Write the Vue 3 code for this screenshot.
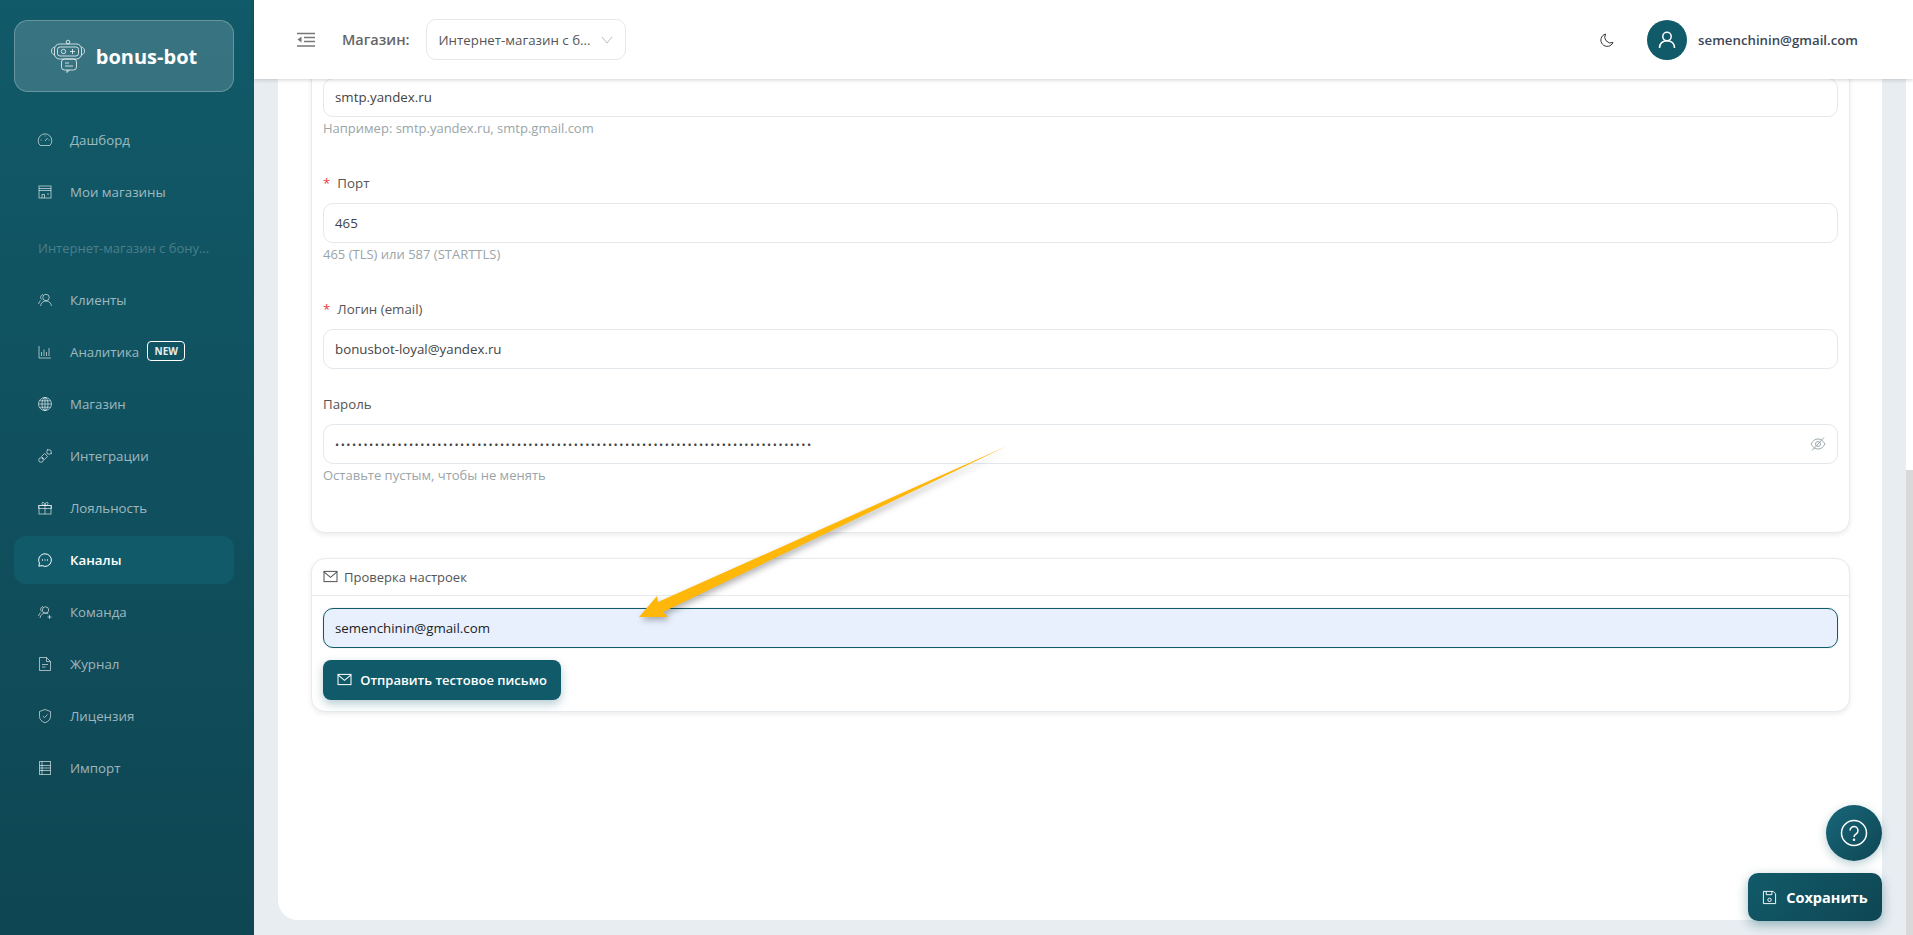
<template>
  <div class="app">
    <!-- SIDEBAR -->
    <aside class="sidebar">
      <div class="logo">
        <svg class="logo-icon" viewBox="0 0 34 34" fill="none" stroke="currentColor" stroke-width="1">
          <circle cx="17" cy="3" r="1.800" />
          <rect x="3.500" y="5" width="27" height="15" rx="5" />
          <path d="M3.500 8c-4 1-4 7 0 8M30.500 8c4 1 4 7 0 8" />
          <rect x="6.500" y="8" width="21" height="9" rx="2.500" />
          <circle cx="12.500" cy="12.500" r="2.200" />
          <path d="M19 12.500h5M21.500 10v5" />
          <rect x="10.500" y="20" width="15" height="11" rx="3" />
          <path d="M14 24h4M14 27h8" />
          <path d="M16 31v2.500l2.500-2.500" />
        </svg>
        <span>bonus-bot</span>
      </div>

      <nav class="nav">
        <template v-for="item in menu" :key="item.name">
          <div v-if="item.group" class="group">{{ item.name }}</div>
          <div v-else class="nav-item" :class="{ active: item.active }">
            <svg class="nav-icon" viewBox="0 0 16 16" fill="none" stroke="currentColor" stroke-width="1" v-html="item.icon"></svg>
            <span>{{ item.name }}</span>
            <span v-if="item.badge" class="badge">{{ item.badge }}</span>
          </div>
        </template>
      </nav>
    </aside>

    <div class="main">
      <!-- HEADER -->
      <header class="header">
        <svg class="toggle" viewBox="0 0 18 16" fill="none" stroke="#777" stroke-width="1.500">
          <path d="M0 1.500h18M7 5.500h11M7 9.500h11M0 14h18" />
          <path d="M4.500 4.500v6L0.500 7.500z" fill="#777" stroke="none" />
        </svg>
        <span class="shop-label">Магазин:</span>
        <div class="select">
          <span>Интернет-магазин с б...</span>
          <svg viewBox="0 0 12 8" fill="none" stroke="#bbb" stroke-width="1"><path d="M1 1l5 6 5-6" /></svg>
        </div>
        <div class="spacer"></div>
        <svg class="moon" viewBox="0 0 16 16" fill="none" stroke="#333" stroke-width="1">
          <path d="M6.500 2a6.300 6.300 0 1 0 7.500 8.500 6 6 0 0 1-7.500-8.500z" />
        </svg>
        <div class="avatar">
          <svg viewBox="0 0 20 20" fill="none" stroke="#fff" stroke-width="1.500">
            <circle cx="10" cy="6.500" r="4.200" />
            <path d="M2.500 18c0-4.500 3.200-7.300 7.500-7.300s7.500 2.800 7.500 7.300" />
          </svg>
        </div>
        <span class="email">semenchinin@gmail.com</span>
      </header>

      <div class="body">
        <div class="content">
          <div class="page">
            <!-- SMTP FORM -->
            <div class="card form-card">
              <div v-for="f in fields" :key="f.value" class="field">
                <label v-if="f.label"><i v-if="f.required">*</i>{{ f.label }}</label>
                <div class="input" :class="{ password: f.password }">
                  <span>{{ f.value }}</span>
                  <svg v-if="f.password" viewBox="0 0 16 16" fill="none" stroke="#9fabaf" stroke-width="1">
                    <path d="M1 8c2-3.500 4.300-5 7-5s5 1.500 7 5c-2 3.500-4.300 5-7 5s-5-1.500-7-5z" />
                    <circle cx="8" cy="8" r="2.500" />
                    <path d="M2 14.500L14 1.500" />
                  </svg>
                </div>
                <div v-if="f.hint" class="hint">{{ f.hint }}</div>
              </div>
            </div>

            <!-- TEST -->
            <div class="card test-card">
              <div class="test-head">
                <svg viewBox="0 0 16 14" fill="none" stroke="#555" stroke-width="1.100">
                  <rect x="1" y="1.500" width="14" height="11" />
                  <path d="M1 2l7 6 7-6" />
                </svg>
                <span>Проверка настроек</span>
              </div>
              <div class="test-body">
                <div class="input focused"><span>semenchinin@gmail.com</span></div>
                <button class="send">
                  <svg viewBox="0 0 16 14" fill="none" stroke="#fff" stroke-width="1.100">
                    <rect x="1" y="1.500" width="14" height="11" />
                    <path d="M1 2l7 6 7-6" />
                  </svg>
                  Отправить тестовое письмо
                </button>
              </div>
            </div>
          </div>
        </div>
        <div class="scrollbar"><div class="thumb"></div></div>
      </div>
    </div>

    <!-- ARROW annotation -->
    <svg class="arrow" width="400" height="190" viewBox="630 440 400 190">
      <polygon points="1007,446 658,602 657,596 639,617 668,617 663,612" fill="#ffb70a" />
    </svg>

    <button class="help">
      <svg viewBox="0 0 28 28" fill="none" stroke="#fff" stroke-width="1.500">
        <circle cx="14" cy="14" r="12.500" />
        <path d="M10 11.500a4 4 0 1 1 6.200 3.300c-1.500 1-2.200 1.700-2.200 3.200" />
        <circle cx="14" cy="20.800" r="0.500" fill="#fff" />
      </svg>
    </button>
    <button class="save">
      <svg viewBox="0 0 16 16" fill="none" stroke="#fff" stroke-width="1">
        <path d="M1.500 1.500h10.500l2.500 2.500v10.500h-13z" />
        <path d="M4.500 1.500v3.500h6v-3.500" />
        <circle cx="8" cy="10.500" r="1.800" />
      </svg>
      Сохранить
    </button>
  </div>
</template>

<script setup>
const menu = [
  { name: 'Дашборд', icon: '<path d="M3.200 13.500a6.800 6.800 0 1 1 9.600 0z"/><path d="M8 9l2.500-3"/><path d="M3.500 8h1M11.500 8h1M8 3.500v1"/>' },
  { name: 'Мои магазины', icon: '<rect x="2" y="2" width="12" height="12"/><path d="M2 6.500h12M2 4.500h12M5 14v-3.500h2.500V14M10 10h2"/>' },
  { name: 'Интернет-магазин с бону...', group: true },
  { name: 'Клиенты', icon: '<circle cx="9" cy="5.500" r="3.200"/><path d="M3.500 14c.5-3 2.500-5 5.500-5s5 2 5.500 5M6 2.500C3.500 3 3 6 4.500 7.500M3.500 8.500C2.500 9.500 2 10.500 1.500 12"/>' },
  { name: 'Аналитика', badge: 'NEW', icon: '<path d="M2 2v12h12"/><path d="M4.500 12V8M7 12V5.500M9.500 12V8M12 12V4"/>' },
  { name: 'Магазин', icon: '<circle cx="8" cy="8" r="6.500"/><ellipse cx="8" cy="8" rx="3" ry="6.500"/><path d="M1.500 8h13M2.500 4.800h11M2.500 11.200h11M8 1.500v13"/>' },
  { name: 'Интеграции', icon: '<ellipse cx="4" cy="12" rx="2.300" ry="2.300"/><ellipse cx="12" cy="4" rx="2.300" ry="2.300"/><path d="M4.500 8.500l3-3 3 3-3 3zM5.500 10.500l-0.500 .5M10.500 5.500l.5-.5M10 2l1-1M14 6l1-1"/>' },
  { name: 'Лояльность', icon: '<rect x="2" y="5.500" width="12" height="8.500"/><path d="M1.500 5.500h13v3h-13zM8 5.500V14M8 5.500C6 5.500 4.500 4.500 5 3s3-.5 3 2.500c0-3 2.500-4 3-2.500s-1 2.500-3 2.500z"/>' },
  { name: 'Каналы', active: true, icon: '<path d="M8 1.800a6.300 6.300 0 1 1-3 11.800l-3.200.6.700-3A6.300 6.300 0 0 1 8 1.800z"/><path d="M5 8h.8M7.600 8h.8M10.200 8h.8" stroke-width="1.400"/>' },
  { name: 'Команда', icon: '<circle cx="8.500" cy="6" r="3.200"/><path d="M3 14c.5-3 2.500-5 5.500-5 1 0 2 .3 2.800.8M6 2.500C3.500 3 3 6 4.500 7.500M3.500 8.500C2.500 9.500 2 10.500 1.500 12M12.500 11v4M10.500 13h4"/>' },
  { name: 'Журнал', icon: '<path d="M2.500 1.500h7l4 4v9h-11z"/><path d="M9.500 1.500v4h4M5 8.500h6M5 11h3.500"/>' },
  { name: 'Лицензия', icon: '<path d="M8 1.500l5.500 2v5c0 3-2.200 5-5.500 6.300-3.300-1.300-5.500-3.300-5.500-6.300v-5z"/><path d="M5.800 8l1.700 1.700 3-3.200"/>' },
  { name: 'Импорт', icon: '<rect x="2.500" y="1.500" width="11" height="13"/><path d="M5 1.500v13M2.500 5.500h11M2.500 8h11M2.500 10.500h11"/>' }
]

const fields = [
  { value: 'smtp.yandex.ru', hint: 'Например: smtp.yandex.ru, smtp.gmail.com' },
  { label: 'Порт', required: true, value: '465', hint: '465 (TLS) или 587 (STARTTLS)' },
  { label: 'Логин (email)', required: true, value: 'bonusbot-loyal@yandex.ru' },
  { label: 'Пароль', password: true, value: '•'.repeat(84), hint: 'Оставьте пустым, чтобы не менять' }
]
</script>

<style>
html, body {
  margin: 0;
  overflow: hidden;
}
</style>

<style scoped>
.app {
  display: flex;
  position: relative;
  height: 935px;
  overflow: hidden;
  background: #e8edf2;
  font-family: "Open Sans", "Noto Sans", sans-serif;
  color: #333;
}

/* sidebar */
.sidebar {
  width: 254px;
  flex-shrink: 0;
  padding: 20px 20px 0 14px;
  box-sizing: border-box;
  background: linear-gradient(180deg, #115a69 0%, #0f4653 100%);
}

.logo {
  height: 72px;
  box-sizing: border-box;
  display: flex;
  align-items: center;
  justify-content: center;
  gap: 11px;
  border: 1px solid rgba(255, 255, 255, 0.25);
  border-radius: 14px;
  background: rgba(255, 255, 255, 0.16);
  color: #fff;
  font-size: 20px;
  font-weight: 700;
}

.logo-icon {
  width: 34px;
  height: 34px;
  color: rgba(255, 255, 255, 0.75);
}

.nav {
  margin-top: 24px;
}

.nav-item {
  height: 48px;
  margin-bottom: 4px;
  padding-left: 24px;
  display: flex;
  align-items: center;
  border-radius: 12px;
  color: rgba(255, 255, 255, 0.6);
  font-size: 13.300px;
  font-weight: 500;
}

.nav-item.active {
  background: #115a69;
  color: #fff;
  font-weight: 600;
}

.nav-icon {
  width: 16px;
  height: 16px;
  margin-left: -1px;
  margin-right: 17px;
  flex-shrink: 0;
}

.group {
  height: 56px;
  padding-left: 24px;
  display: flex;
  align-items: center;
  color: rgba(255, 255, 255, 0.25);
  font-size: 13px;
  font-weight: 500;
}

.badge {
  margin-left: 8px;
  width: 38px;
  height: 20px;
  line-height: 18px;
  margin-top: -2px;
  text-align: center;
  box-sizing: border-box;
  border: 1px solid #fff;
  border-radius: 4px;
  color: #e6eef0;
  font-size: 10px;
  font-weight: 700;
}

/* header */
.main {
  flex: 1;
  min-width: 0;
  display: flex;
  flex-direction: column;
}

.header {
  height: 79px;
  flex-shrink: 0;
  position: relative;
  z-index: 2;
  display: flex;
  align-items: center;
  padding: 0 55px 0 43px;
  background: #fff;
  box-shadow: 0 1px 4px rgba(0, 0, 0, 0.18);
}

.toggle {
  width: 18px;
  height: 16px;
  margin-right: 27px;
}

.shop-label {
  margin-right: 16px;
  color: #666;
  font-size: 14.500px;
  font-weight: 600;
}

.select {
  width: 200px;
  height: 41px;
  box-sizing: border-box;
  display: flex;
  align-items: center;
  justify-content: space-between;
  padding: 0 12px;
  border: 1px solid #e2e8ec;
  border-radius: 10px;
  color: #555;
  font-size: 13.300px;
}

.select svg {
  width: 12px;
  height: 8px;
}

.spacer {
  flex: 1;
}

.moon {
  width: 16px;
  height: 16px;
  margin-right: 32px;
}

.avatar {
  width: 40px;
  height: 40px;
  border-radius: 50%;
  background: #115a69;
  display: flex;
  align-items: center;
  justify-content: center;
  margin-right: 11px;
}

.avatar svg {
  width: 20px;
  height: 20px;
}

.email {
  font-size: 13.250px;
  font-weight: 600;
  color: #3a4656;
}

/* content */
.body {
  flex: 1;
  min-height: 0;
  display: flex;
}

.content {
  flex: 1;
  min-width: 0;
  padding: 0 24px;
  height: 841px;
}

.page {
  height: 100%;
  box-sizing: border-box;
  padding: 0 32px 0 33px;
  background: #fff;
  border-radius: 0 0 20px 20px;
  overflow: hidden;
}

.scrollbar {
  width: 7px;
  background: #fff;
  flex-shrink: 0;
}

.thumb {
  margin-top: 391px;
  height: 465px;
  background: #d9d9d9;
}

.card {
  border: 1px solid #e6ebef;
  border-radius: 14px;
  background: #fff;
  box-shadow: 0 2px 5px rgba(0, 0, 0, 0.08);
}

.form-card {
  margin-top: -40px;
  padding: 37.500px 11px 11.500px;
}

.field {
  margin-bottom: 25.400px;
}

label {
  display: block;
  height: 20px;
  line-height: 20px;
  margin-bottom: 10px;
  color: #555;
  font-size: 13.300px;
}

label i {
  font-style: normal;
  color: #e53e3e;
  margin-right: 7px;
}

.input {
  height: 39.600px;
  box-sizing: border-box;
  display: flex;
  align-items: center;
  justify-content: space-between;
  padding: 0 11px;
  border: 1px solid #e2e8ec;
  border-radius: 10px;
  background: #fff;
  color: #444;
  font-size: 13.300px;
}

.input svg {
  width: 16px;
  height: 16px;
}

.password span {
  font-size: 11px;
  letter-spacing: 1.550px;
}

.hint {
  height: 31px;
  line-height: 22px;
  color: #9aa5a9;
  font-size: 13px;
}

.test-card {
  margin-top: 25px;
  height: 154px;
  box-sizing: border-box;
}

.test-head {
  height: 37px;
  box-sizing: border-box;
  display: flex;
  align-items: center;
  gap: 6px;
  padding: 0 11px;
  border-bottom: 1px solid #e6ebef;
  color: #555;
  font-size: 13px;
  font-weight: 500;
}

.test-head svg {
  width: 15px;
  height: 13px;
}

.test-body {
  padding: 12px 11px;
}

.input.focused {
  height: 40px;
  border-color: #115a69;
  background: #e8f0fe;
  color: #222;
  box-shadow: 0 0 0 1px rgba(17, 90, 105, 0.05);
}

.send {
  margin-top: 12px;
  width: 238px;
  height: 40px;
  display: flex;
  align-items: center;
  justify-content: center;
  gap: 8px;
  padding: 0;
  border: none;
  border-radius: 8px;
  background: #115a69;
  color: #fff;
  font-family: inherit;
  font-size: 13px;
  font-weight: 600;
  box-shadow: 0 4px 10px rgba(17, 90, 105, 0.3);
}

.send svg {
  width: 15px;
  height: 13px;
}

/* overlays */
.arrow {
  position: absolute;
  left: 630px;
  top: 440px;
  z-index: 3;
  filter: drop-shadow(2px 3px 3px rgba(0, 0, 0, 0.3));
}

.help {
  position: absolute;
  left: 1826px;
  top: 805px;
  width: 56px;
  height: 56px;
  padding: 0;
  display: flex;
  align-items: center;
  justify-content: center;
  border: none;
  border-radius: 50%;
  background: linear-gradient(135deg, #17677a 0%, #0f4653 100%);
  box-shadow: 0 3px 10px rgba(17, 90, 105, 0.3);
}

.help svg {
  width: 28px;
  height: 28px;
}

.save {
  position: absolute;
  left: 1748px;
  top: 873px;
  width: 134px;
  height: 48px;
  display: flex;
  align-items: center;
  justify-content: center;
  gap: 9px;
  padding: 0;
  border: none;
  border-radius: 10px;
  background: linear-gradient(135deg, #115a69 0%, #0f4653 100%);
  color: #fff;
  font-family: inherit;
  font-size: 14.500px;
  font-weight: 700;
  box-shadow: 0 4px 12px rgba(17, 90, 105, 0.4);
}

.save svg {
  width: 15px;
  height: 15px;
}
</style>
